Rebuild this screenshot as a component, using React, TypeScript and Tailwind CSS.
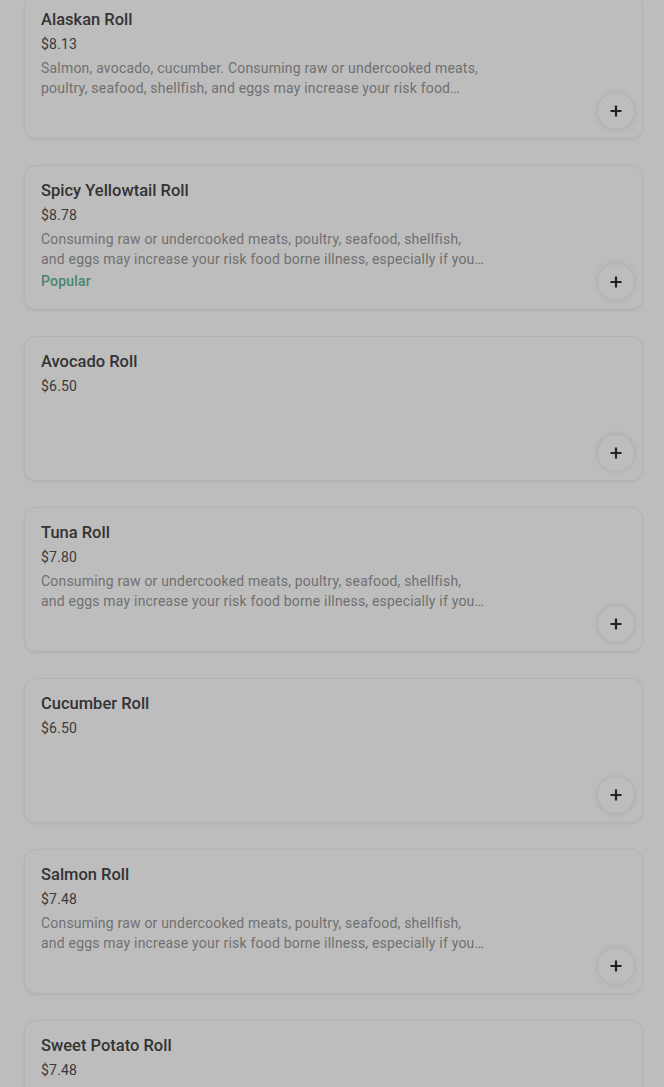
const items = [
  {
    name: "Alaskan Roll",
    price: "$8.13",
    desc: "Salmon, avocado, cucumber. Consuming raw or undercooked meats, poultry, seafood, shellfish, and eggs may increase your risk food borne illness, especially if you have certain medical conditions.",
  },
  {
    name: "Spicy Yellowtail Roll",
    price: "$8.78",
    desc: "Consuming raw or undercooked meats, poultry, seafood, shellfish, and eggs may increase your risk food borne illness, especially if you have certain medical conditions.",
    popular: true,
  },
  { name: "Avocado Roll", price: "$6.50" },
  {
    name: "Tuna Roll",
    price: "$7.80",
    desc: "Consuming raw or undercooked meats, poultry, seafood, shellfish, and eggs may increase your risk food borne illness, especially if you have certain medical conditions.",
  },
  { name: "Cucumber Roll", price: "$6.50" },
  {
    name: "Salmon Roll",
    price: "$7.48",
    desc: "Consuming raw or undercooked meats, poultry, seafood, shellfish, and eggs may increase your risk food borne illness, especially if you have certain medical conditions.",
  },
  { name: "Sweet Potato Roll", price: "$7.48" },
];

function PlusIcon() {
  return (
    <svg width="14" height="14" viewBox="0 0 14 14" fill="none">
      <path d="M7 1.5v11M1.5 7h11" stroke="#222" strokeWidth="2.2" />
    </svg>
  );
}

export default function App() {
  return (
    <main
      className="h-[1087px] overflow-hidden bg-[#bdbdbd] pl-6 pr-[21px]"
      style={{ fontFamily: "Roboto, 'Noto Sans', sans-serif" }}
    >
      <div className="-mt-[6px] flex flex-col gap-[26px]">
        {items.map((item) => (
          <div
            key={item.name}
            className="relative h-[145px] shrink-0 rounded-xl border border-[#b3b3b3] bg-[#bdbdbd] px-4 pt-[13px] shadow-[0_1px_3px_rgba(0,0,0,0.06)]"
          >
            <h3 className="text-[16.5px] font-medium leading-6 text-[#333]">{item.name}</h3>
            <p className="mt-[2px] text-[14px] leading-5 tracking-[0.2px] text-[#3a3a3a]">{item.price}</p>
            {item.desc && (
              <p className="mt-[4px] line-clamp-2 max-w-[444px] text-[14px] leading-5 tracking-[0.2px] text-[#707070]">
                {item.desc}
              </p>
            )}
            {item.popular && (
              <p className="mt-[2px] text-[14px] font-medium leading-5 tracking-[0.2px] text-[#4a876a]">Popular</p>
            )}
            <button className="absolute bottom-[9px] right-[8px] grid h-9 w-9 place-items-center rounded-full bg-[#bdbdbd] shadow-[0_0_6px_rgba(0,0,0,0.12)]">
              <PlusIcon />
            </button>
          </div>
        ))}
      </div>
    </main>
  );
}
